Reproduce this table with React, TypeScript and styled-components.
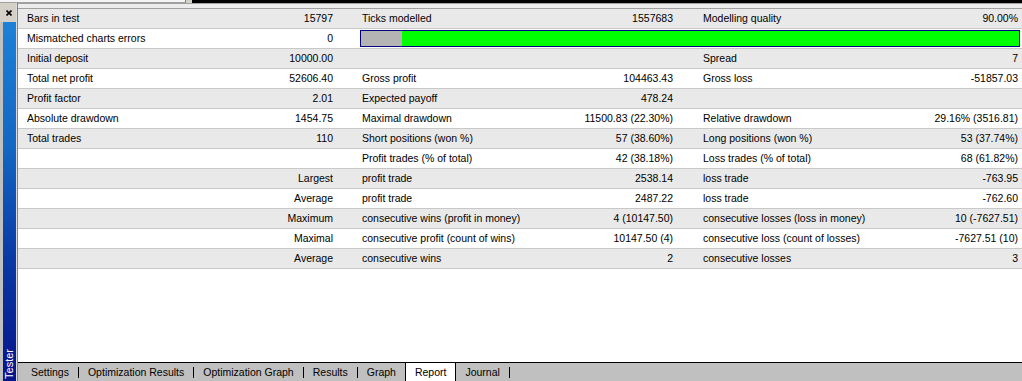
import React from "react";
import styled, { createGlobalStyle } from "styled-components";

const Global = createGlobalStyle`
  html, body { margin: 0; padding: 0; background: #fff; }
  body {
    font-family: "Liberation Sans", Arial, sans-serif;
    font-size: 10.5px;
    color: #000;
  }
  * { box-sizing: border-box; }
`;

const Window = styled.div`
  width: 1022px;
  height: 381px;
  display: flex;
  flex-direction: column;
  overflow: hidden;
  background: #c0c0c0;
`;

const TopStrip = styled.div`
  display: flex;
  height: 3px;
  flex: none;
`;

const TopBox = styled.div`
  width: 186px;
  background: #f4f4f4;
  border-right: 1px solid #808080;
  border-bottom: 1px solid #a0a0a0;
`;

const TopGap = styled.div`
  width: 6px;
  background: #d4d0c8;
`;

const TopDark = styled.div`
  flex: 1;
  background: #000;
`;

const Body = styled.div`
  flex: 1;
  display: flex;
  min-height: 0;
`;

const Side = styled.div`
  width: 17px;
  flex: none;
  display: flex;
  flex-direction: column;
  background: #c0c0c0;
  border-right: 1px solid #dcdcdc;
`;

const CloseArea = styled.div`
  height: 19px;
  flex: none;
  display: flex;
  align-items: center;
  padding-left: 6px;
  background: #d4d0c8;
`;

const Caption = styled.div`
  flex: 1;
  margin-left: 3px;
  background: linear-gradient(to bottom, #1d80d8 0%, #1366c4 35%, #0a3aa6 65%, #06148a 100%);
  display: flex;
  align-items: flex-end;
  justify-content: center;
`;

const CaptionText = styled.span`
  writing-mode: vertical-rl;
  transform: rotate(180deg);
  color: #fff;
  font-size: 11px;
  line-height: 13px;
  padding-top: 2px;
`;

const Main = styled.div`
  flex: 1;
  display: flex;
  flex-direction: column;
  min-width: 0;
  border-left: 1px solid #808080;
`;

const MainTop = styled.div`
  height: 5px;
  flex: none;
  background: #ececec;
  border-top: 1px solid #a0a0a0;
`;

const Table = styled.div`
  flex: none;
  background: #fff;
  border-top: 1px solid #a0a0a0;
`;

const Row = styled.div<{ $shade: boolean }>`
  display: grid;
  grid-template-columns: 172px 153px 177px 163px 177px 1fr;
  height: 20px;
  background: ${(p) => (p.$shade ? "#e9e9e9" : "#ffffff")};
  border-bottom: 1px solid #c8c8c8;
`;

const Label = styled.div<{ $pad: number }>`
  padding-left: ${(p) => p.$pad}px;
  line-height: 19px;
  white-space: nowrap;
`;

const Value = styled.div<{ $pad: number }>`
  padding-right: ${(p) => p.$pad}px;
  line-height: 19px;
  text-align: right;
  white-space: nowrap;
`;

const BarCell = styled.div`
  grid-column: 3 / 7;
  margin: 1px 2px 0 17px;
  height: 17px;
  border: 1px solid #000080;
  display: flex;
  background: #00ff00;
`;

const BarGray = styled.div`
  width: 41px;
  background: #b4b4b4;
`;

const Filler = styled.div`
  flex: 1;
  background: #fff;
`;

const TabBar = styled.div`
  height: 19px;
  flex: none;
  display: flex;
  align-items: stretch;
  background: #c0c0c0;
  border-top: 1px solid #000;
  padding-left: 4px;
  font-size: 10.5px;
`;

const Tab = styled.div<{ $active?: boolean }>`
  display: flex;
  align-items: center;
  padding: ${(p) => (p.$active ? "0 9px 1px" : "0 9px 1px")};
  white-space: nowrap;
  background: ${(p) => (p.$active ? "#fff" : "transparent")};
  border: ${(p) => (p.$active ? "1px solid #000" : "none")};
  border-bottom: none;
  margin-top: ${(p) => (p.$active ? "-1px" : "0")};
`;

const Sep = styled.div`
  width: 1px;
  height: 11px;
  align-self: center;
  background: #000;
  margin-top: 1px;
`;

type Cells = [string, string, string, string, string, string];

const rows: { cells: Cells; bar?: boolean }[] = [
  { cells: ["Bars in test", "15797", "Ticks modelled", "1557683", "Modelling quality", "90.00%"] },
  { cells: ["Mismatched charts errors", "0", "", "", "", ""], bar: true },
  { cells: ["Initial deposit", "10000.00", "", "", "Spread", "7"] },
  { cells: ["Total net profit", "52606.40", "Gross profit", "104463.43", "Gross loss", "-51857.03"] },
  { cells: ["Profit factor", "2.01", "Expected payoff", "478.24", "", ""] },
  { cells: ["Absolute drawdown", "1454.75", "Maximal drawdown", "11500.83 (22.30%)", "Relative drawdown", "29.16% (3516.81)"] },
  { cells: ["Total trades", "110", "Short positions (won %)", "57 (38.60%)", "Long positions (won %)", "53 (37.74%)"] },
  { cells: ["", "", "Profit trades (% of total)", "42 (38.18%)", "Loss trades (% of total)", "68 (61.82%)"] },
  { cells: ["", "Largest", "profit trade", "2538.14", "loss trade", "-763.95"] },
  { cells: ["", "Average", "profit trade", "2487.22", "loss trade", "-762.60"] },
  { cells: ["", "Maximum", "consecutive wins (profit in money)", "4 (10147.50)", "consecutive losses (loss in money)", "10 (-7627.51)"] },
  { cells: ["", "Maximal", "consecutive profit (count of wins)", "10147.50 (4)", "consecutive loss (count of losses)", "-7627.51 (10)"] },
  { cells: ["", "Average", "consecutive wins", "2", "consecutive losses", "3"] },
];

const tabs = ["Settings", "Optimization Results", "Optimization Graph", "Results", "Graph", "Report", "Journal"];
const activeTab = "Report";

const CloseIcon = () => (
  <svg width="6" height="6" viewBox="0 0 6 6">
    <path d="M0.5 0.5 L5.5 5.5 M5.5 0.5 L0.5 5.5" stroke="#000" strokeWidth="1.6" />
  </svg>
);

export default function App() {
  return (
    <>
      <Global />
      <Window>
        <TopStrip>
          <TopBox />
          <TopGap />
          <TopDark />
        </TopStrip>
        <Body>
          <Side>
            <CloseArea>
              <CloseIcon />
            </CloseArea>
            <Caption>
              <CaptionText>Tester</CaptionText>
            </Caption>
          </Side>
          <Main>
            <MainTop />
            <Table>
              {rows.map((r, i) => (
                <Row key={i} $shade={i % 2 === 0}>
                  <Label $pad={9}>{r.cells[0]}</Label>
                  <Value $pad={10}>{r.cells[1]}</Value>
                  {r.bar ? (
                    <BarCell>
                      <BarGray />
                    </BarCell>
                  ) : (
                    <>
                      <Label $pad={19}>{r.cells[2]}</Label>
                      <Value $pad={10}>{r.cells[3]}</Value>
                      <Label $pad={20}>{r.cells[4]}</Label>
                      <Value $pad={4}>{r.cells[5]}</Value>
                    </>
                  )}
                </Row>
              ))}
            </Table>
            <Filler />
            <TabBar>
              {tabs.map((t, i) => {
                const active = t === activeTab;
                const next = tabs[i + 1];
                const showSep = !active && next !== activeTab;
                return (
                  <React.Fragment key={t}>
                    <Tab $active={active}>{t}</Tab>
                    {showSep && <Sep />}
                  </React.Fragment>
                );
              })}
            </TabBar>
          </Main>
        </Body>
      </Window>
    </>
  );
}
